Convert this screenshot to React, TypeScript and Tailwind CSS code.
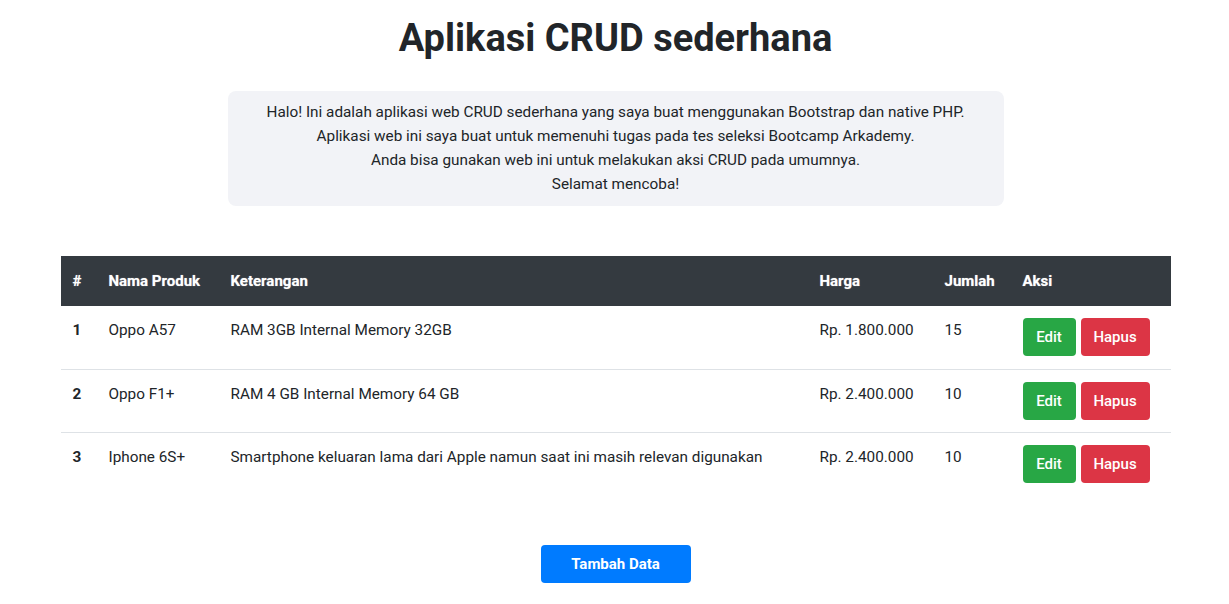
import React from "react";

const rows = [
  { no: 1, nama: "Oppo A57", ket: "RAM 3GB Internal Memory 32GB", harga: "Rp. 1.800.000", jumlah: 15 },
  { no: 2, nama: "Oppo F1+", ket: "RAM 4 GB Internal Memory 64 GB", harga: "Rp. 2.400.000", jumlah: 10 },
  { no: 3, nama: "Iphone 6S+", ket: "Smartphone keluaran lama dari Apple namun saat ini masih relevan digunakan", harga: "Rp. 2.400.000", jumlah: 10 },
];

export default function App() {
  return (
    <div className="min-h-[604px] bg-white pt-[1px] text-[#212529]" style={{ fontFamily: "Roboto, 'Noto Sans', sans-serif" }}>
      <div className="mx-auto w-[1140px] pl-[16px] pr-[14px]">
        <h1 className="pt-[12px] text-center text-[38px] font-bold leading-[50px]">Aplikasi CRUD sederhana</h1>
        <div className="mx-auto mt-[28px] w-[776px] rounded-[8px] bg-[#f2f3f7] px-4 pt-[9px] pb-[10px] text-center text-[15.3px] leading-[24px]">
          <p>Halo! Ini adalah aplikasi web CRUD sederhana yang saya buat menggunakan Bootstrap dan native PHP.</p>
          <p>Aplikasi web ini saya buat untuk memenuhi tugas pada tes seleksi Bootcamp Arkademy.</p>
          <p>Anda bisa gunakan web ini untuk melakukan aksi CRUD pada umumnya.</p>
          <p>Selamat mencoba!</p>
        </div>
        <table className="mt-[50px] w-[1110px] table-fixed border-collapse text-[15.3px] leading-[24px]">
          <colgroup>
            <col className="w-[36px]" />
            <col className="w-[122px]" />
            <col className="w-[589px]" />
            <col className="w-[125px]" />
            <col className="w-[78px]" />
            <col className="w-[160px]" />
          </colgroup>
          <thead>
            <tr className="h-[50px] bg-[#343a40] text-left text-white">
              {["#", "Nama Produk", "Keterangan", "Harga", "Jumlah", "Aksi"].map((h) => (
                <th key={h} className="px-[12px] py-[12px] text-[15px] font-bold [text-shadow:0_0_1px_rgba(255,255,255,0.6)]">
                  {h}
                </th>
              ))}
            </tr>
          </thead>
          <tbody>
            {rows.map((r, i) => (
              <tr key={r.no} className={`h-[63px] align-top ${i < rows.length - 1 ? "border-b border-[#dee2e6]" : ""}`}>
                <td className="px-[12px] py-[12px] font-bold">{r.no}</td>
                <td className="px-[12px] py-[12px]">{r.nama}</td>
                <td className="px-[12px] py-[12px]">{r.ket}</td>
                <td className="px-[12px] py-[12px]">{r.harga}</td>
                <td className="px-[12px] py-[12px]">{r.jumlah}</td>
                <td className="px-[12px] py-[12px]">
                  <div className="flex gap-[5px]">
                    <button className="h-[38px] w-[53px] rounded-[4px] bg-[#28a745] text-[15px] font-medium text-white">Edit</button>
                    <button className="h-[38px] w-[69px] rounded-[4px] bg-[#dc3545] text-[15px] font-medium text-white">Hapus</button>
                  </div>
                </td>
              </tr>
            ))}
          </tbody>
        </table>
        <div className="mt-[50px] flex justify-center">
          <button className="h-[38px] w-[150px] rounded-[4px] bg-[#007bff] text-[15px] font-bold text-white">Tambah Data</button>
        </div>
      </div>
    </div>
  );
}
